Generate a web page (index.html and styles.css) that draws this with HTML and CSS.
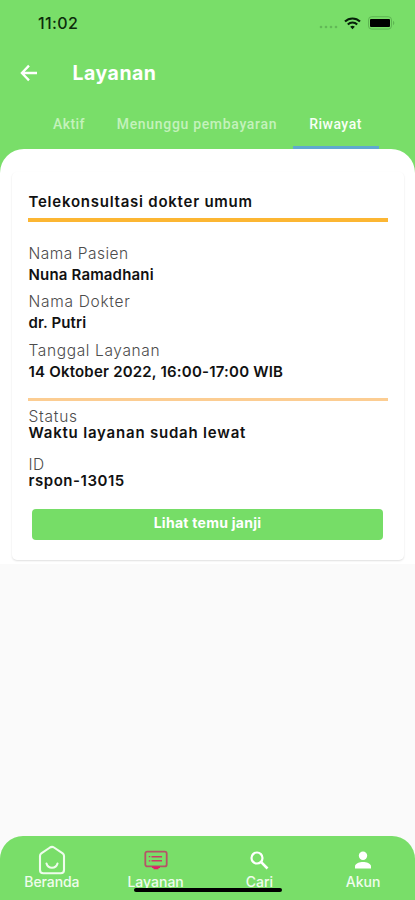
FILE: index.html
```html
<!DOCTYPE html>
<html lang="id">
<head>
<meta charset="utf-8">
<meta name="viewport" content="width=device-width, initial-scale=1">
<title>Layanan</title>
<link rel="stylesheet" href="styles.css">
</head>
<body>
<div class="app">
  <header class="header">
    <div class="status">
      <span class="time">11:02</span>
      <div class="indicators">
        <svg width="20" height="4" viewBox="0 0 20 4" fill="#62b957"><circle cx="2" cy="2" r="1.3"/><circle cx="7" cy="2" r="1.3"/><circle cx="12" cy="2" r="1.3"/><circle cx="17" cy="2" r="1.3"/></svg>
        <svg class="wifi" width="17" height="13" viewBox="0 0 17 13" fill="none" stroke="#07200a" stroke-width="2.1"><path d="M1 4.6a10.7 10.7 0 0 1 15 0M3.8 7.5a6.7 6.7 0 0 1 9.4 0"/><path d="M8.5 12.2 6.2 9.8a3.3 3.3 0 0 1 4.6 0z" fill="#07200a" stroke="none"/></svg>
        <svg class="battery" width="27" height="14" viewBox="0 0 27 14"><rect x=".5" y=".7" width="23" height="12.4" rx="3.2" fill="none" stroke="#5eb552"/><rect x="2" y="3" width="20" height="8" rx="1" fill="#000"/><path d="M25 4.8v4.4c1.8-.8 1.8-3.6 0-4.4z" fill="#5eb552"/></svg>
      </div>
    </div>
    <div class="titlebar">
      <svg class="back" width="18" height="18" viewBox="0 0 18 18" fill="none" stroke="#fff" stroke-width="2.3"><path d="M17 9H2.5M9 1.6 1.9 9 9 16.4"/></svg>
      <h1 class="title">Layanan</h1>
    </div>
    <nav class="tabs">
      <span class="tab tab-aktif">Aktif</span>
      <span class="tab tab-bayar">Menunggu pembayaran</span>
      <span class="tab active">Riwayat</span>
    </nav>
  </header>
  <main class="sheet">
    <section class="card">
      <h2 class="card-title">Telekonsultasi dokter umum</h2>
      <dl class="patient">
        <dt class="ls-pasien">Nama Pasien</dt><dd class="ls-nuna">Nuna Ramadhani</dd>
        <dt class="ls-dokter">Nama Dokter</dt><dd class="ls-putri">dr. Putri</dd>
        <dt class="ls-tanggal">Tanggal Layanan</dt><dd class="ls-date">14 Oktober 2022, 16:00-17:00 WIB</dd>
      </dl>
      <dl class="state">
        <dt class="ls-status">Status</dt><dd class="ls-waktu">Waktu layanan sudah lewat</dd>
        <dt class="ls-id">ID</dt><dd class="ls-code">rspon-13015</dd>
      </dl>
      <button class="action" type="button">Lihat temu janji</button>
    </section>
  </main>
  <footer class="bottom">
    <a class="item"><svg width="28" height="30" viewBox="0 0 28 30" fill="none" stroke="#effced" stroke-width="2.1" stroke-linejoin="round" stroke-linecap="round"><path d="M12 2.5 3.3 8.3Q2 9.2 2 11v14q0 3.3 3.3 3.3h17.4q3.3 0 3.3-3.3V11q0-1.8-1.3-2.7L16 2.5q-2-1.3-4 0z"/><path d="M8.5 18.5c1.5 5.6 9.5 5.6 11 0"/></svg><span class="n-beranda">Beranda</span></a>
    <a class="item"><svg width="24" height="20" viewBox="0 0 24 20" fill="none" stroke="#b65367" stroke-width="1.8"><rect x="1.3" y="1.6" width="21.4" height="14.8" rx="2"/><path d="M7.5 6.7H18M7.500 10.8H18" stroke="#ca3c66" stroke-width="1.5"/><path d="M4.8 6.7h1.5M4.8 10.8h1.5" stroke="#ca3c66" stroke-width="1.3"/><path d="M8 16.5h8v1.5h-1.5v1.2h-5V18H8z" fill="#e31b68" stroke="none"/></svg><span class="n-layanan">Layanan</span></a>
    <a class="item"><svg width="19" height="19" viewBox="0 0 19 19" fill="none" stroke="#fff" stroke-width="2.2"><circle cx="7" cy="7" r="5.5"/><path d="m11.2 11.2 6.3 6.3" stroke-width="2.6"/></svg><span class="n-cari">Cari</span></a>
    <a class="item"><svg width="18" height="18" viewBox="0 0 18 18" fill="#fff"><circle cx="9" cy="4.7" r="4.2"/><path d="M1 17.5v-2.2c0-3 4.8-4.4 8-4.4s8 1.4 8 4.4v2.2z"/></svg><span class="n-akun">Akun</span></a>
    <div class="home-indicator"></div>
  </footer>
</div>
</body>
</html>
```
FILE: styles.css
```css
* { box-sizing: border-box; margin: 0; padding: 0; }
body { background: #fafafa; font-family: Inter, "Liberation Sans", sans-serif; color: #111; }
.app { height: 900px; display: flex; flex-direction: column; background: #fafafa; overflow: hidden; }
.header { height: 149px; background: #79de69; flex: none; }
.status { height: 46px; padding: 0 20px 0 38px; display: flex; align-items: center; justify-content: space-between; }
.time { font-size: 16px; font-weight: 500; letter-spacing: .4px; color: #0c2b0b; }
.indicators { display: flex; align-items: center; height: 14px; }
.indicators svg:first-child { margin-top: 8px; }
.wifi { margin-left: 5px; }
.battery { margin-left: 7px; }
.titlebar { height: 53px; padding-left: 20px; display: flex; align-items: center; }
.title { margin-left: 34.5px; font-size: 19.5px; line-height: 24px; font-weight: 700; letter-spacing: .5px; color: #fff; }
.tabs { height: 50px; padding-left: 38px; display: flex; }
.tab { line-height: 50px; padding: 0 15px; font-size: 14px; font-family: Roboto, sans-serif; font-weight: 500; color: #c4f2bc; white-space: nowrap; letter-spacing: .4px; }
.tab-bayar { margin-left: 2px; letter-spacing: .68px; }
.tab.active { color: #f7fff5; margin-left: 1px; padding-left: 16px; width: 86px; letter-spacing: .5px; border-bottom: 3px solid #5fa9d0; }
.sheet { height: 415px; flex: none; padding: 23px 11px 4px 12px; background: linear-gradient(#79de69 0 24px, #fff 24px); position: relative; z-index: 0; }
.sheet::before { content: ""; position: absolute; inset: 0; background: #fff; border-radius: 24px 24px 0 0; z-index: -1; }
.card { height: 388px; padding: 20px 16px 0; border-radius: 5px; box-shadow: 0 1px 2px rgba(0,0,0,.13); background: #fff; }
.card-title { height: 30px; line-height: 20px; padding-left: .5px; border-bottom: 4px solid #fcb633; font-size: 15px; font-weight: 600; letter-spacing: .76px; white-space: nowrap; }
dl { white-space: nowrap; }
dt, dd { padding-left: .5px; }
dt { font-size: 15.5px; font-weight: 300; color: #4c4c4c; line-height: 20px; }
dd { font-size: 15px; font-weight: 600; line-height: 20px; }
.ls-pasien { letter-spacing: .5px; }
.ls-nuna { letter-spacing: .17px; }
.ls-dokter { letter-spacing: .7px; }
.ls-putri { letter-spacing: .1px; }
.ls-tanggal { letter-spacing: .63px; }
.ls-date { letter-spacing: .2px; }
.ls-status { letter-spacing: .75px; }
.ls-waktu { letter-spacing: .8px; }
.ls-id { letter-spacing: .4px; }
.ls-code { letter-spacing: .54px; }
.patient { height: 179px; padding-top: 21.5px; border-bottom: 3px solid #fccd92; }
.patient dd { margin: 1px 0 7.5px; }
.state { height: 107.5px; padding-top: 8px; }
.state dt, .state dd { line-height: 16px; }
.state dd { margin-bottom: 16px; }
.action { display: block; width: 351px; height: 31px; margin-left: 4px; border: 0; border-radius: 4px; background: #76dd67; color: #fff; font: 700 14px/28px Inter, sans-serif; letter-spacing: .27px; padding-bottom: 2px; }
.bottom { margin-top: auto; height: 64px; padding-top: 9px; background: #79de69; border-radius: 23px 23px 0 0; display: grid; grid-template-columns: repeat(4, 1fr); position: relative; }
.item { display: flex; flex-direction: column; align-items: center; color: #effced; font-size: 14px; font-weight: 500; }
.item svg { margin: auto 0; }
.item span { line-height: 14px; margin-bottom: 12px; }
.n-beranda { letter-spacing: -.1px; }
.home-indicator { position: absolute; left: 134px; top: 52px; width: 148px; height: 4px; border-radius: 2px; background: #000; }
```
